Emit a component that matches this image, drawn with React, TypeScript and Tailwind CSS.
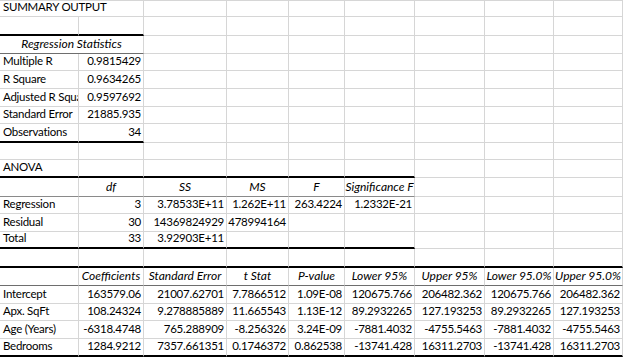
type Cell = { t?: string; a?: "l" | "r" | "c"; i?: boolean; span?: number };

const L = (t: string): Cell => ({ t, a: "l" });
const R = (t: string): Cell => ({ t, a: "r" });
const H = (t: string): Cell => ({ t, a: "c", i: true });
const E: Cell = {};

const blank = (n: number): Cell[] => Array.from({ length: n }, () => E);

const rows: Cell[][] = [
  [{ t: "SUMMARY OUTPUT", a: "l", span: 2 }, ...blank(7)],
  blank(9),
  [{ t: "Regression Statistics", a: "c", i: true, span: 2 }, ...blank(7)],
  [L("Multiple R"), R("0.9815429"), ...blank(7)],
  [L("R Square"), R("0.9634265"), ...blank(7)],
  [L("Adjusted R Square"), R("0.9597692"), ...blank(7)],
  [L("Standard Error"), R("21885.935"), ...blank(7)],
  [L("Observations"), R("34"), ...blank(7)],
  blank(9),
  [L("ANOVA"), ...blank(8)],
  [E, H("df"), H("SS"), H("MS"), H("F"), H("Significance F"), ...blank(3)],
  [L("Regression"), R("3"), R("3.78533E+11"), R("1.262E+11"), R("263.4224"), R("1.2332E-21"), ...blank(3)],
  [L("Residual"), R("30"), R("14369824929"), R("478994164"), ...blank(5)],
  [L("Total"), R("33"), R("3.92903E+11"), ...blank(6)],
  blank(9),
  [
    E,
    H("Coefficients"),
    H("Standard Error"),
    H("t Stat"),
    H("P-value"),
    H("Lower 95%"),
    H("Upper 95%"),
    H("Lower 95.0%"),
    H("Upper 95.0%"),
  ],
  [L("Intercept"), R("163579.06"), R("21007.62701"), R("7.7866512"), R("1.09E-08"), R("120675.766"), R("206482.362"), R("120675.766"), R("206482.362")],
  [L("Apx. SqFt"), R("108.24324"), R("9.278885889"), R("11.665543"), R("1.13E-12"), R("89.2932265"), R("127.193253"), R("89.2932265"), R("127.193253")],
  [L("Age (Years)"), R("-6318.4748"), R("765.288909"), R("-8.256326"), R("3.24E-09"), R("-7881.4032"), R("-4755.5463"), R("-7881.4032"), R("-4755.5463")],
  [L("Bedrooms"), R("1284.9212"), R("7357.661351"), R("0.1746372"), R("0.862538"), R("-13741.428"), R("16311.2703"), R("-13741.428"), R("16311.2703")],
];

// bottom edge of a cell: thick rule, thin header rule or plain gridline
function bottom(r: number, c: number) {
  if ((r === 1 || r === 7) && c < 2) return "border-b-2 border-b-black";
  if ((r === 9 || r === 13) && c < 6) return "border-b-2 border-b-black";
  if (r === 14 || r === 19) return "border-b-2 border-b-black";
  if (r === 2 && c < 2) return "border-b border-b-[#6e6e6e]";
  if (r === 10 && c < 6) return "border-b border-b-[#8a8a8a]";
  if (r === 15) return "border-b border-b-[#6e6e6e]";
  return "border-b border-b-[#d6d6d6]";
}

const align = { l: "justify-start pl-[3px]", r: "justify-end pr-[2px]", c: "justify-center" };

export default function App() {
  return (
    <div className="w-[623px] h-[358px] overflow-hidden bg-white text-black font-['Lato',sans-serif] text-[11.5px]">
      <div className="grid border-t border-[#d6d6d6] grid-cols-[79px_65px_83px_62px_56px_70px_70px_69px_69px] grid-rows-[16px_19px_18px_17px_18px_18px_17px_19px_17px_18px_19px_17px_18px_17px_19px_18px_18px_17px_18px_18px]">
        {rows.map((row, r) => {
          let col = 0;
          return row.map((cell, k) => {
            const c = col;
            col += cell.span ?? 1;
            return (
              <div
                key={`${r}-${k}`}
                className={`flex items-end overflow-hidden whitespace-nowrap leading-[14px] pb-[2px] border-r border-r-[#d6d6d6] ${bottom(r, c)} ${
                  cell.span === 2 ? "col-span-2" : ""
                } ${align[cell.a ?? "l"]} ${cell.i ? "italic text-[12px]" : "tracking-[-0.25px]"}`}
              >
                {cell.t && <span className="shrink-0">{cell.t}</span>}
              </div>
            );
          });
        })}
      </div>
    </div>
  );
}
